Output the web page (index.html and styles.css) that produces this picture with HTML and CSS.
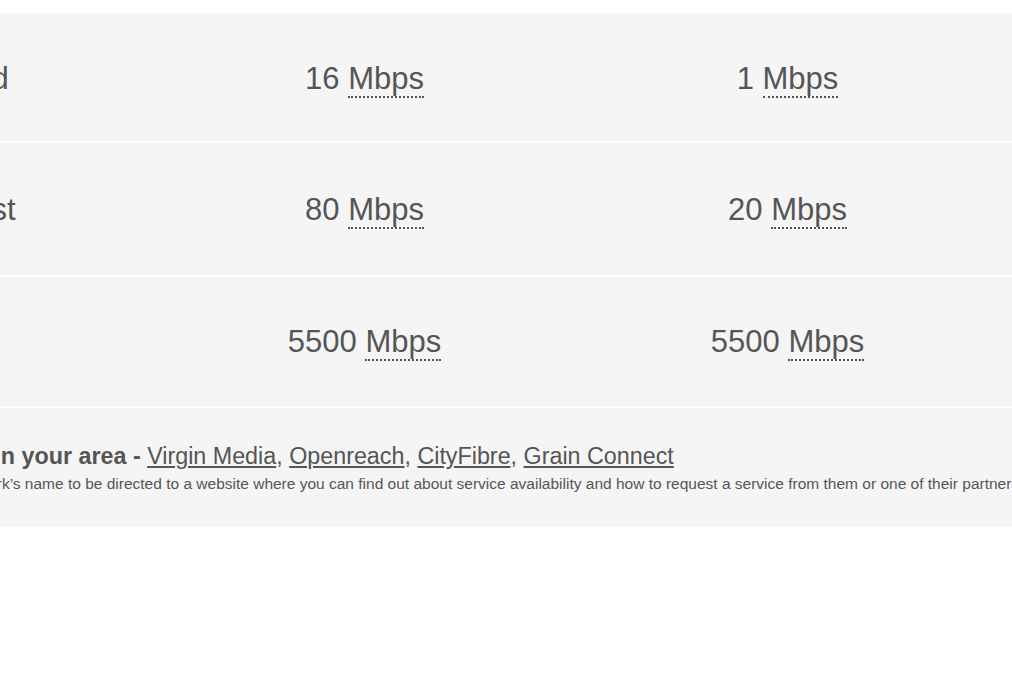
FILE: index.html
```html
<!DOCTYPE html>
<html lang="en">
<head>
<meta charset="utf-8">
<title>Broadband speeds</title>
<link rel="stylesheet" href="styles.css">
</head>
<body>
<div class="panel">
  <div class="row row-1">
    <div class="cell name">Standard</div>
    <div class="cell speed">16 <abbr class="unit" title="Megabits per second">Mbps</abbr></div>
    <div class="cell speed">1 <abbr class="unit" title="Megabits per second">Mbps</abbr></div>
  </div>
  <div class="row row-2">
    <div class="cell name">Superfast</div>
    <div class="cell speed">80 <abbr class="unit" title="Megabits per second">Mbps</abbr></div>
    <div class="cell speed">20 <abbr class="unit" title="Megabits per second">Mbps</abbr></div>
  </div>
  <div class="row row-3">
    <div class="cell name">Ultrafast</div>
    <div class="cell speed">5500 <abbr class="unit" title="Megabits per second">Mbps</abbr></div>
    <div class="cell speed">5500 <abbr class="unit" title="Megabits per second">Mbps</abbr></div>
  </div>
  <div class="footer">
    <p class="networks"><strong>Networks in your area - </strong><a href="#">Virgin Media</a>, <a href="#">Openreach</a>, <a href="#">CityFibre</a>, <a href="#">Grain Connect</a></p>
    <p class="note">Click on a network’s name to be directed to a website where you can find out about service availability and how to request a service from them or one of their partners.</p>
  </div>
</div>
</body>
</html>
```

FILE: styles.css
```css
html, body {
  margin: 0;
  padding: 0;
  overflow: hidden;
  background: #ffffff;
}

body {
  font-family: "Liberation Sans", Arial, sans-serif;
  color: #555555;
}

.panel {
  margin-top: 13px;
  margin-left: -270px;
  width: 1400px;
  background: #f5f5f5;
}

.row {
  display: grid;
  grid-template-columns: 423px 423px 423px 1fr;
  align-items: center;
  font-size: 31px;
}

.row + .row,
.footer {
  border-top: 2px solid #ffffff;
}

.row-1 { height: 128px; }
.row-2 { height: 132px; }
.row-3 { height: 129px; }

.row-1 .cell { padding-top: 4px; }
.row-2 .cell { padding-top: 2px; }
.row-3 .cell { padding-top: 0; }

.name {
  padding-left: 153px;
  white-space: nowrap;
}

.speed {
  text-align: center;
  white-space: nowrap;
}

.unit {
  text-decoration: none;
  border-bottom: 2px dotted #555555;
}

.footer {
  height: 121px;
  box-sizing: border-box;
  padding: 35px 0 0 153px;
}

.networks {
  margin: 0;
  font-size: 23.3px;
  line-height: 26px;
  white-space: nowrap;
}

.networks a {
  color: #555555;
  text-decoration: underline;
}

.note {
  margin: 5px 0 0;
  font-size: 15.5px;
  line-height: 20px;
  white-space: nowrap;
}
```
